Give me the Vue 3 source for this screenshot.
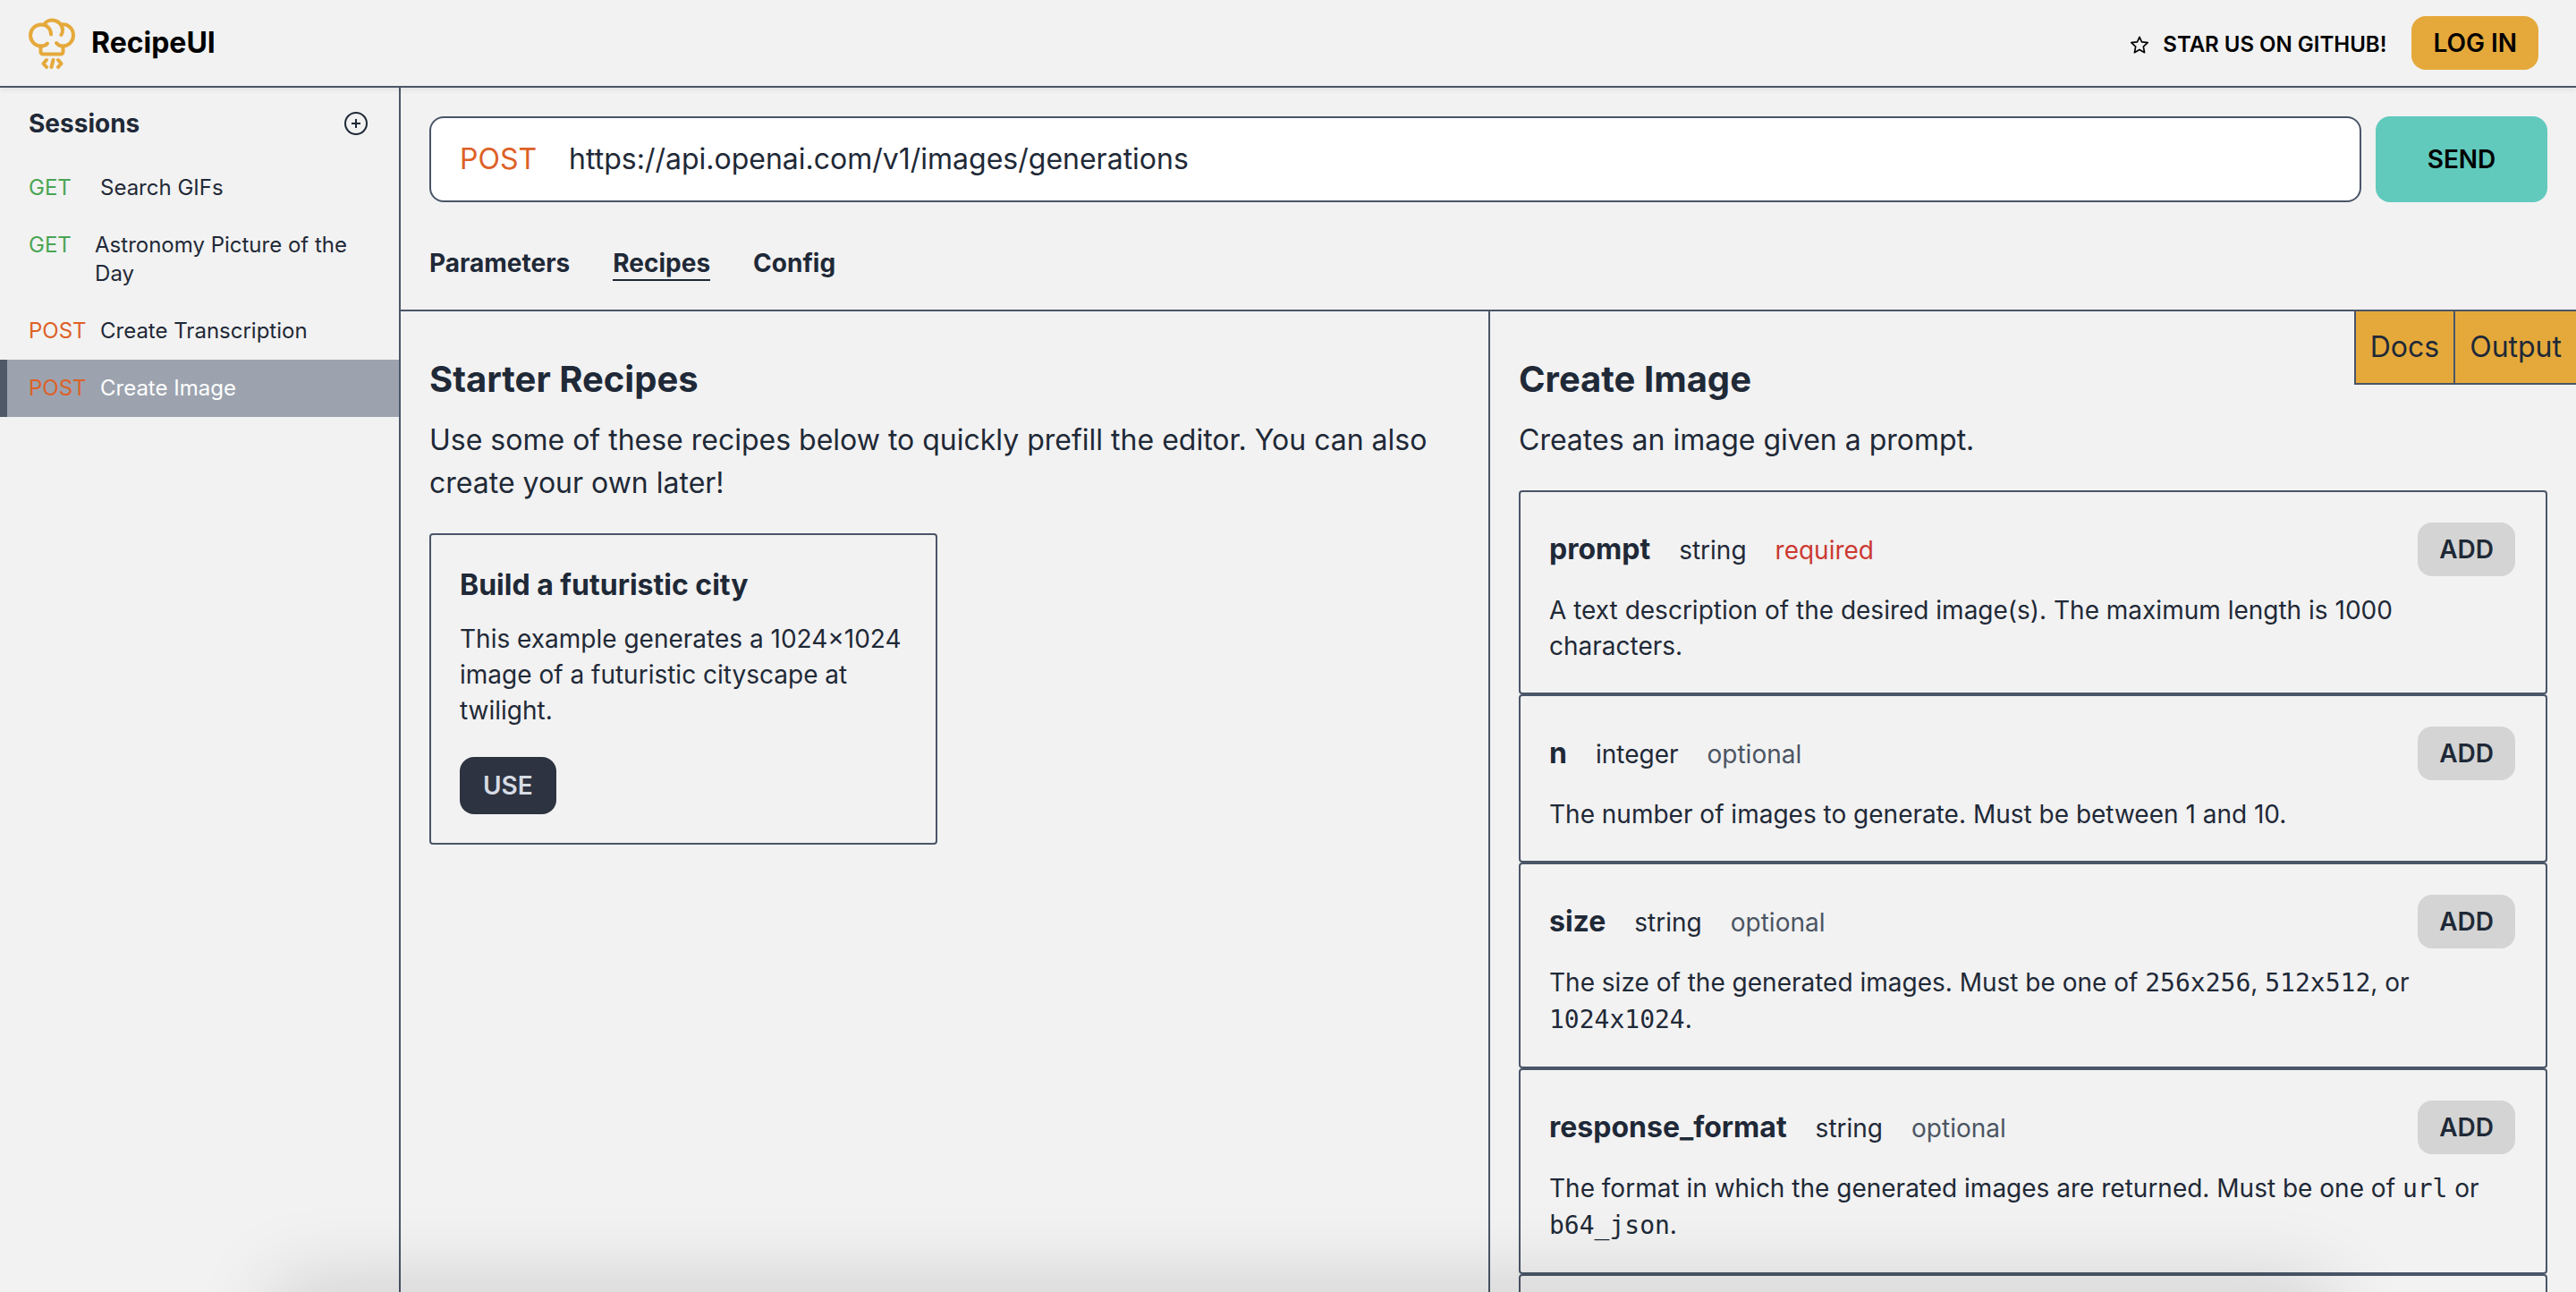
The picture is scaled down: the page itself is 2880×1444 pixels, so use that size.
<script setup>
import { ref } from 'vue'

const sessions = [
  { method: 'GET', name: 'Search GIFs' },
  { method: 'GET', name: 'Astronomy Picture of the Day' },
  { method: 'POST', name: 'Create Transcription' },
  { method: 'POST', name: 'Create Image' },
]
const activeSession = ref('Create Image')

const tabs = ['Parameters', 'Recipes', 'Config']
const activeTab = ref('Recipes')

const url = ref('https://api.openai.com/v1/images/generations')

const params = [
  {
    name: 'prompt',
    type: 'string',
    required: true,
    text: [{ t: 'A text description of the desired image(s). The maximum length is 1000 characters.' }],
  },
  {
    name: 'n',
    type: 'integer',
    required: false,
    text: [{ t: 'The number of images to generate. Must be between 1 and 10.' }],
  },
  {
    name: 'size',
    type: 'string',
    required: false,
    text: [
      { t: 'The size of the generated images. Must be one of ' },
      { code: true, t: '256x256' },
      { t: ', ' },
      { code: true, t: '512x512' },
      { t: ', or ' },
      { code: true, t: '1024x1024' },
      { t: '.' },
    ],
  },
  {
    name: 'response_format',
    type: 'string',
    required: false,
    text: [
      { t: 'The format in which the generated images are returned. Must be one of ' },
      { code: true, t: 'url' },
      { t: ' or ' },
      { code: true, t: 'b64_json' },
      { t: '.' },
    ],
  },
]
</script>

<template>
  <div class="page">
    <header class="navbar">
      <a class="brand" href="#">
        <svg class="logo" viewBox="0 0 52 57" fill="none" stroke="#e5a93b" stroke-width="4" stroke-linecap="round" stroke-linejoin="round" aria-hidden="true">
          <path d="M25 18.500C25 12 20.500 7.500 14 7.500C7.500 7.500 2 12.500 2 19.500C2 26.500 7.500 31.500 14 31.500C17 31.500 19.500 30.500 21 28.500" />
          <path d="M17 8C19 4.500 22 2.500 26 2.500C32.500 2.500 38 7.500 38 13.500C38 15.500 37.500 17.500 36.500 19" />
          <path d="M36.500 7.500C44 6.500 50 12 50 19.500C50 26.500 44.500 31.500 38 31.500C35.500 31.500 33 30.500 31 28" />
          <path d="M13.500 31.500V37.500C13.500 39.500 14.500 40.500 16.500 40.500H35.500C37.500 40.500 38.500 39.500 38.500 37.500V31.500" />
          <path d="M20 47L16.500 51L20 55M27.500 47L25.500 55M33 47L36.500 51L33 55" />
        </svg>
        <span>RecipeUI</span>
      </a>
      <div class="nav-actions">
        <a class="star-link" href="#">
          <svg viewBox="0 0 24 24" fill="none" stroke="#000" stroke-width="2" stroke-linejoin="round" aria-hidden="true">
            <path d="M12 1.500L15 8.200L23 9.200L17.200 14.500L18.700 22.500L12 18.700L5.300 22.500L6.800 14.500L1 9.200L9 8.200Z" />
          </svg>
          <span>STAR US ON GITHUB!</span>
        </a>
        <button class="btn login" type="button">LOG IN</button>
      </div>
    </header>

    <div class="body">
      <aside class="sidebar">
        <div class="sidebar-head">
          <h2>Sessions</h2>
          <button class="add-session" type="button" aria-label="New session">
            <svg viewBox="0 0 26 26" fill="none" stroke="#1f2937" stroke-width="2" aria-hidden="true">
              <circle cx="13" cy="13" r="12" />
              <path d="M13 8V18M8 13H18" />
            </svg>
          </button>
        </div>
        <nav>
          <a
            v-for="s in sessions"
            :key="s.name"
            href="#"
            class="session"
            :class="{ active: s.name === activeSession }"
            @click.prevent="activeSession = s.name"
          >
            <span class="method" :class="s.method.toLowerCase()">{{ s.method }}</span>
            <span class="label">{{ s.name }}</span>
          </a>
        </nav>
      </aside>

      <main class="main">
        <section class="request">
          <div class="url-row">
            <label class="url-box">
              <span class="post">POST</span>
              <input v-model="url" type="text" aria-label="Request URL" />
            </label>
            <button class="btn send" type="button">SEND</button>
          </div>
          <div class="tabs">
            <button
              v-for="t in tabs"
              :key="t"
              type="button"
              class="tab"
              :class="{ active: t === activeTab }"
              @click="activeTab = t"
            >{{ t }}</button>
          </div>
        </section>

        <div class="columns">
          <section class="pane">
            <h1>Starter Recipes</h1>
            <p class="lead">Use some of these recipes below to quickly prefill the editor. You can also create your own later!</p>
            <div class="recipes">
              <article class="recipe">
                <h3>Build a futuristic city</h3>
                <p>This example generates a 1024×1024 image of a futuristic cityscape at twilight.</p>
                <button class="btn use" type="button">USE</button>
              </article>
            </div>
          </section>

          <section class="pane docs">
            <div class="switch">
              <button type="button">Docs</button>
              <button type="button">Output</button>
            </div>
            <h1>Create Image</h1>
            <p class="lead">Creates an image given a prompt.</p>
            <div class="params">
              <article v-for="p in params" :key="p.name" class="param">
                <div class="param-head">
                  <div class="param-title">
                    <h3>{{ p.name }}</h3>
                    <span>{{ p.type }}</span>
                    <span :class="p.required ? 'required' : 'optional'">{{ p.required ? 'required' : 'optional' }}</span>
                  </div>
                  <button class="btn add" type="button">ADD</button>
                </div>
                <p><template v-for="(part, i) in p.text" :key="i"><code v-if="part.code">{{ part.t }}</code><template v-else>{{ part.t }}</template></template></p>
              </article>
              <div class="param"></div>
            </div>
          </section>
        </div>
      </main>
    </div>
    <div class="bottom-shade"></div>
  </div>
</template>

<style>
body {
  margin: 0;
  background: #f2f2f2;
}
</style>

<style scoped>
* {
  box-sizing: border-box;
}

.page {
  position: relative;
  display: flex;
  flex-direction: column;
  height: 100vh;
  overflow: hidden;
  background: #f2f2f2;
  color: #1f2937;
  font-family: Inter, "Liberation Sans", sans-serif;
  font-size: 28px;
  line-height: 40px;
}

h1, h2, h3, p {
  margin: 0;
}

a {
  color: inherit;
  text-decoration: none;
}

button {
  padding: 0;
  border: 0;
  background: none;
  color: inherit;
  font: inherit;
  cursor: pointer;
}

.btn {
  border-radius: 16px;
  font-weight: 600;
}

.navbar {
  position: relative;
  z-index: 1;
  flex: none;
  display: flex;
  align-items: center;
  justify-content: space-between;
  height: 98px;
  padding: 0 42px 0 32px;
  border-bottom: 2px solid #4a5568;
  box-shadow: 0 2px 6px rgba(0, 0, 0, 0.08);
  color: #000;
}

.brand {
  display: flex;
  align-items: center;
  gap: 18px;
  font-size: 32px;
  font-weight: 700;
}

.logo {
  width: 52px;
  height: 57px;
}

.nav-actions {
  display: flex;
  align-items: center;
  gap: 28px;
}

.star-link {
  display: flex;
  align-items: center;
  gap: 16px;
  padding-top: 3px;
  font-size: 24px;
  font-weight: 600;
}

.star-link svg {
  width: 20px;
  height: 20px;
}

.login {
  height: 60px;
  padding: 0 24px;
  background: #e5a93b;
}

.body {
  flex: 1;
  display: flex;
  min-height: 0;
}

.sidebar {
  flex: none;
  width: 448px;
  border-right: 2px solid #4a5568;
}

.sidebar-head {
  display: flex;
  align-items: center;
  justify-content: space-between;
  height: 80px;
  padding: 0 35px 0 32px;
}

.sidebar-head h2 {
  font-size: 28px;
  font-weight: 700;
}

.add-session svg {
  display: block;
  width: 26px;
  height: 26px;
}

.session {
  display: flex;
  padding: 16px 32px;
  font-size: 24px;
  line-height: 32px;
}

.session.active {
  background: #9ca3af;
  box-shadow: inset 8px 0 #4f5866;
  color: #fff;
}

.method {
  width: 80px;
}

.get {
  color: #4aa555;
}

.post {
  color: #dd6127;
}

.main {
  flex: 1;
  display: flex;
  flex-direction: column;
  min-width: 0;
}

.request {
  flex: none;
  padding: 32px;
  border-bottom: 2px solid #4a5568;
}

.url-row {
  display: flex;
  gap: 16px;
}

.url-box {
  flex: 1;
  display: flex;
  align-items: center;
  gap: 36px;
  height: 96px;
  padding: 0 32px;
  border: 2px solid #4a5568;
  border-radius: 16px;
  background: #fff;
  font-size: 32px;
}

.url-box input {
  flex: 1;
  min-width: 0;
  padding: 0;
  border: 0;
  outline: 0;
  background: none;
  color: inherit;
  font: inherit;
}

.send {
  width: 192px;
  background: #61cabd;
  color: #000;
}

.tabs {
  display: flex;
  gap: 48px;
  margin-top: 48px;
}

.tab {
  font-weight: 700;
}

.tab.active {
  box-shadow: inset 0 -2px #1f2937;
}

.columns {
  flex: 1;
  display: grid;
  grid-template-columns: 1fr 1fr;
  min-height: 0;
}

.pane {
  position: relative;
  padding: 48px 32px 0;
  overflow: hidden;
}

.docs {
  border-left: 2px solid #4a5568;
}

h1 {
  font-size: 40px;
  line-height: 56px;
}

.lead {
  margin-top: 16px;
  font-size: 32px;
  line-height: 48px;
}

.recipes {
  display: grid;
  grid-template-columns: 1fr 1fr;
  gap: 16px;
  margin-top: 32px;
}

.recipe {
  padding: 32px;
  border: 2px solid #4a5568;
  border-radius: 4px;
}

h3 {
  font-size: 32px;
  line-height: 48px;
}

.recipe p {
  margin-top: 16px;
}

.use {
  height: 64px;
  margin-top: 32px;
  padding: 0 26px;
  background: #2d3340;
  color: #d7dbe3;
}

.switch {
  position: absolute;
  top: 0;
  right: 0;
  display: flex;
}

.switch button {
  padding: 16px;
  border: solid #4a5568;
  border-width: 0 0 2px 2px;
  background: #e5a93b;
  font-size: 32px;
  line-height: 48px;
}

.params {
  margin-top: 32px;
}

.param {
  padding: 32px;
  border: 2px solid #4a5568;
  border-radius: 4px;
}

.param-head {
  display: flex;
  align-items: center;
  justify-content: space-between;
  padding: 2px 2px 2px 0;
}

.param-title {
  display: flex;
  align-items: baseline;
  gap: 32px;
}

.required {
  color: #cc3a32;
}

.optional {
  color: #4b5563;
}

.add {
  height: 60px;
  padding: 0 24px;
  background: #d4d4d4;
}

.param p {
  margin-top: 16px;
}

code {
  font-family: "DejaVu Sans Mono", "Liberation Mono", monospace;
}

/* Soft shade rising from below the window's bottom edge */
.bottom-shade {
  position: absolute;
  top: 100%;
  left: 11%;
  right: 10%;
  height: 80px;
  box-shadow: 0 0 90px 10px rgba(0, 0, 0, 0.15);
  pointer-events: none;
}
</style>
